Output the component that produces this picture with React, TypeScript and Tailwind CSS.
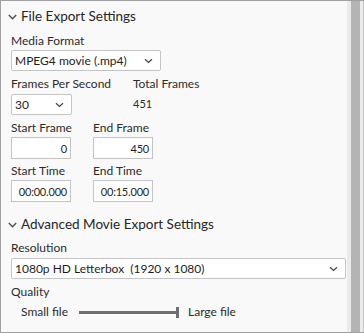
import React from "react";

const font = { fontFamily: 'Lato, "Noto Sans", sans-serif' };

function Chevron({ className = "" }: { className?: string }) {
  return (
    <svg width="9" height="6" viewBox="0 0 9 6" className={className}>
      <path d="M0.8 1 L4.5 4.7 L8.2 1" fill="none" stroke="#555" strokeWidth="1.6" />
    </svg>
  );
}

function SmallChevron() {
  return (
    <svg width="9" height="6" viewBox="0 0 9 6">
      <path d="M1 1.2 L4.5 4.5 L8 1.2" fill="none" stroke="#444" strokeWidth="1.2" />
    </svg>
  );
}

function Header({ title }: { title: string }) {
  return (
    <div className="flex h-[20px] items-center gap-[4px] pl-[7px] text-[13.5px] text-[#262626]">
      <Chevron />
      <span className="leading-none">{title}</span>
    </div>
  );
}

function Label({ children, className = "" }: { children: React.ReactNode; className?: string }) {
  return <div className={"flex h-[16px] items-center whitespace-nowrap text-[12px] leading-none text-[#2b2b2b] " + className}>{children}</div>;
}

function Select({ value, w, className = "" }: { value: string; w: string; className?: string }) {
  return (
    <div
      className={
        "flex h-[21px] shrink-0 items-center justify-between overflow-hidden rounded-[2px] border border-[#c4c4c4] bg-white pl-[3px] pr-[7px] text-[12px] text-[#1e1e1e] " +
        w +
        " " +
        className
      }
    >
      <span className="whitespace-pre leading-none">{value}</span>
      <SmallChevron />
    </div>
  );
}

function Input({ value }: { value: string }) {
  return (
    <div className="flex h-[22px] w-[60px] shrink-0 items-center justify-end overflow-hidden whitespace-nowrap border border-[#c4c4c4] bg-white pr-[3px] text-[11px] leading-none tracking-[-0.2px] text-[#1e1e1e]">
      {value}
    </div>
  );
}

export default function App() {
  return (
    <div className="flex h-[333px] w-[364px] border-y border-l border-[#a0a0a0] bg-[#f9f9f9]" style={font}>
      <div className="flex flex-1 flex-col pl-[10px] pr-[1px]">
        <div className="mt-[6px] -ml-[10px]">
          <Header title="File Export Settings" />
        </div>
        <Label className="mt-[6px]">Media Format</Label>
        <Select value="MPEG4 movie (.mp4)" w="w-[150px]" className="mt-[1px]" />
        <div className="mt-[5px] flex">
          <div className="w-[122px] shrink-0">
            <Label>Frames Per Second</Label>
            <Select value="30" w="w-[61px]" className="mt-[2px] h-[20px]" />
          </div>
          <div>
            <Label>Total Frames</Label>
            <div className="mt-[2px] flex h-[18px] items-center text-[11px] leading-none text-[#2b2b2b]">451</div>
          </div>
        </div>
        <div className="mt-[5px] flex gap-[22px]">
          <div className="w-[60px] shrink-0">
            <Label>Start Frame</Label>
            <div className="mt-[1px]">
              <Input value="0" />
            </div>
          </div>
          <div className="w-[60px] shrink-0">
            <Label>End Frame</Label>
            <div className="mt-[1px]">
              <Input value="450" />
            </div>
          </div>
        </div>
        <div className="mt-[4px] flex gap-[22px]">
          <div className="w-[60px] shrink-0">
            <Label>Start Time</Label>
            <div className="mt-[1px]">
              <Input value="00:00.000" />
            </div>
          </div>
          <div className="w-[60px] shrink-0">
            <Label>End Time</Label>
            <div className="mt-[1px]">
              <Input value="00:15.000" />
            </div>
          </div>
        </div>
        <div className="mt-[13px] -ml-[10px]">
          <Header title="Advanced Movie Export Settings" />
        </div>
        <Label className="mt-[5px]">Resolution</Label>
        <Select value="1080p HD Letterbox  (1920 x 1080)" w="w-[335px]" className="mt-[2px]" />
        <Label className="mt-[5px]">Quality</Label>
        <div className="mt-[4px] flex h-[16px] items-center pl-[10px] text-[12px] text-[#2b2b2b]">
          <span className="w-[58px] shrink-0 whitespace-nowrap leading-none">Small file</span>
          <div className="flex items-center">
            <div className="h-[3px] w-[97px] bg-[#6e6e6e]" />
            <div className="h-[11px] w-[3px] bg-[#6e6e6e]" />
          </div>
          <span className="ml-[9px] whitespace-nowrap leading-none">Large file</span>
        </div>
      </div>
      <div className="flex w-[17px] shrink-0 bg-[#ebebeb] pl-[4px]">
        <div className="w-[9px] bg-[#b4b4b4]" />
        <div className="flex-1" />
        <div className="w-[1px] bg-[#c8c8c8]" />
      </div>
    </div>
  );
}
